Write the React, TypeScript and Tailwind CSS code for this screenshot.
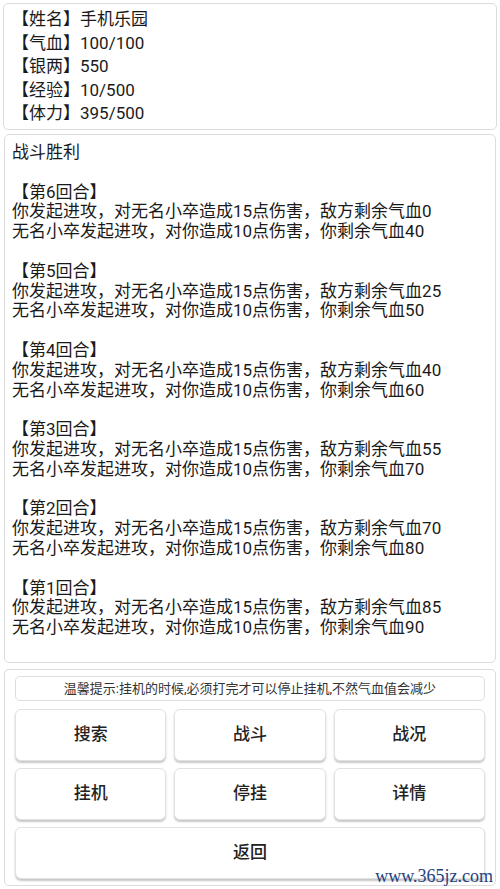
import React from "react";

const rounds = [
  { n: 6, e: 0, y: 40 },
  { n: 5, e: 25, y: 50 },
  { n: 4, e: 40, y: 60 },
  { n: 3, e: 55, y: 70 },
  { n: 2, e: 70, y: 80 },
  { n: 1, e: 85, y: 90 },
];

function Btn({ label, className = "" }: { label: string; className?: string }) {
  return (
    <div
      className={
        "h-[52px] flex items-center justify-center rounded-[6px] border border-[#e2e2e2] bg-white text-[17px] font-medium text-[#222] shadow-[0_2px_2px_rgba(0,0,0,0.22)] " +
        className
      }
    >
      {label}
    </div>
  );
}

export default function App() {
  return (
    <div
      className="relative w-[500px] h-[889px] bg-white text-[#1a1a1a] px-[3px] pt-[3px] flex flex-col"
      style={{ fontFamily: 'Roboto, "Noto Sans CJK SC", sans-serif' }}
    >
      <div className="h-[127px] rounded-[5px] border border-[#dcdcdc] px-[8px] pt-[4px] text-[17px] leading-[23.5px]">
        <div>【姓名】手机乐园</div>
        <div>【气血】100/100</div>
        <div>【银两】550</div>
        <div>【经验】10/500</div>
        <div>【体力】395/500</div>
      </div>

      <div className="mt-[4px] mx-[1px] h-[529px] rounded-[5px] border border-[#dcdcdc] px-[7px] pt-[8px] text-[17px] leading-[19.8px]">
        <div>战斗胜利</div>
        <div>&nbsp;</div>
        {rounds.map((r) => (
          <div key={r.n}>
            <div>【第{r.n}回合】</div>
            <div>你发起进攻，对无名小卒造成15点伤害，敌方剩余气血{r.e}</div>
            <div>无名小卒发起进攻，对你造成10点伤害，你剩余气血{r.y}</div>
            <div>&nbsp;</div>
          </div>
        ))}
      </div>

      <div className="mt-[6px] mx-[1px] h-[217px] rounded-[5px] border border-[#dcdcdc] px-[10px] pt-[6px]">
        <div className="h-[25px] flex items-center justify-center rounded-[5px] border border-[#dedede] text-[13px] text-[#333]">
          温馨提示:挂机的时候,必须打完才可以停止挂机,不然气血值会减少
        </div>
        <div className="mt-[8px] grid grid-cols-3 gap-x-[8px] gap-y-[7px]">
          <Btn label="搜索" />
          <Btn label="战斗" />
          <Btn label="战况" />
          <Btn label="挂机" />
          <Btn label="停挂" />
          <Btn label="详情" />
          <Btn label="返回" className="col-span-3" />
        </div>
      </div>

      <div
        className="absolute right-[7px] bottom-[4px] text-[18px] leading-[18px] text-[#24427f]"
        style={{ fontFamily: '"Liberation Serif", serif' }}
      >
        www.365jz.com
      </div>
    </div>
  );
}
